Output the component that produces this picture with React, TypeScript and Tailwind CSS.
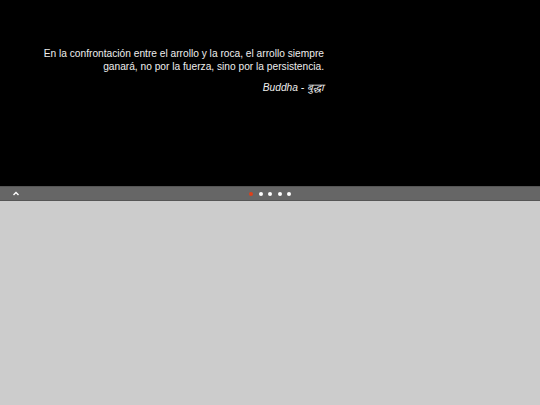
export default function App() {
  const dots = [true, false, false, false, false];
  return (
    <div className="flex h-[405px] w-[540px] flex-col bg-[#cccccc] font-['Liberation_Sans',Arial,sans-serif]">
      <div className="h-[186px] bg-black pt-[47px]">
        <div className="w-[324px] text-right text-[10.2px] leading-[13px] text-[#eeeeee]">
          <p>
            En la confrontación entre el arrollo y la roca, el arrollo siempre
            <br />
            ganará, no por la fuerza, sino por la persistencia.
          </p>
          <p className="mt-[8px] italic">Buddha - बुद्धा</p>
        </div>
      </div>
      <div className="relative flex h-[15px] items-center border-y border-[#555555] bg-[#666666]">
        <svg className="absolute left-[13px] top-[4px]" width="6" height="5" viewBox="0 0 6 5">
          <path d="M0.5 4 L3 1.5 L5.5 4" fill="none" stroke="#ffffff" strokeWidth="1.4" />
        </svg>
        <div className="flex w-full justify-center gap-[5.5px]">
          {dots.map((active, i) => (
            <span
              key={i}
              className={active ? "h-[4px] w-[4px] rounded-full bg-[#e0401a]" : "h-[4px] w-[4px] rounded-full bg-white"}
            />
          ))}
        </div>
      </div>
    </div>
  );
}
